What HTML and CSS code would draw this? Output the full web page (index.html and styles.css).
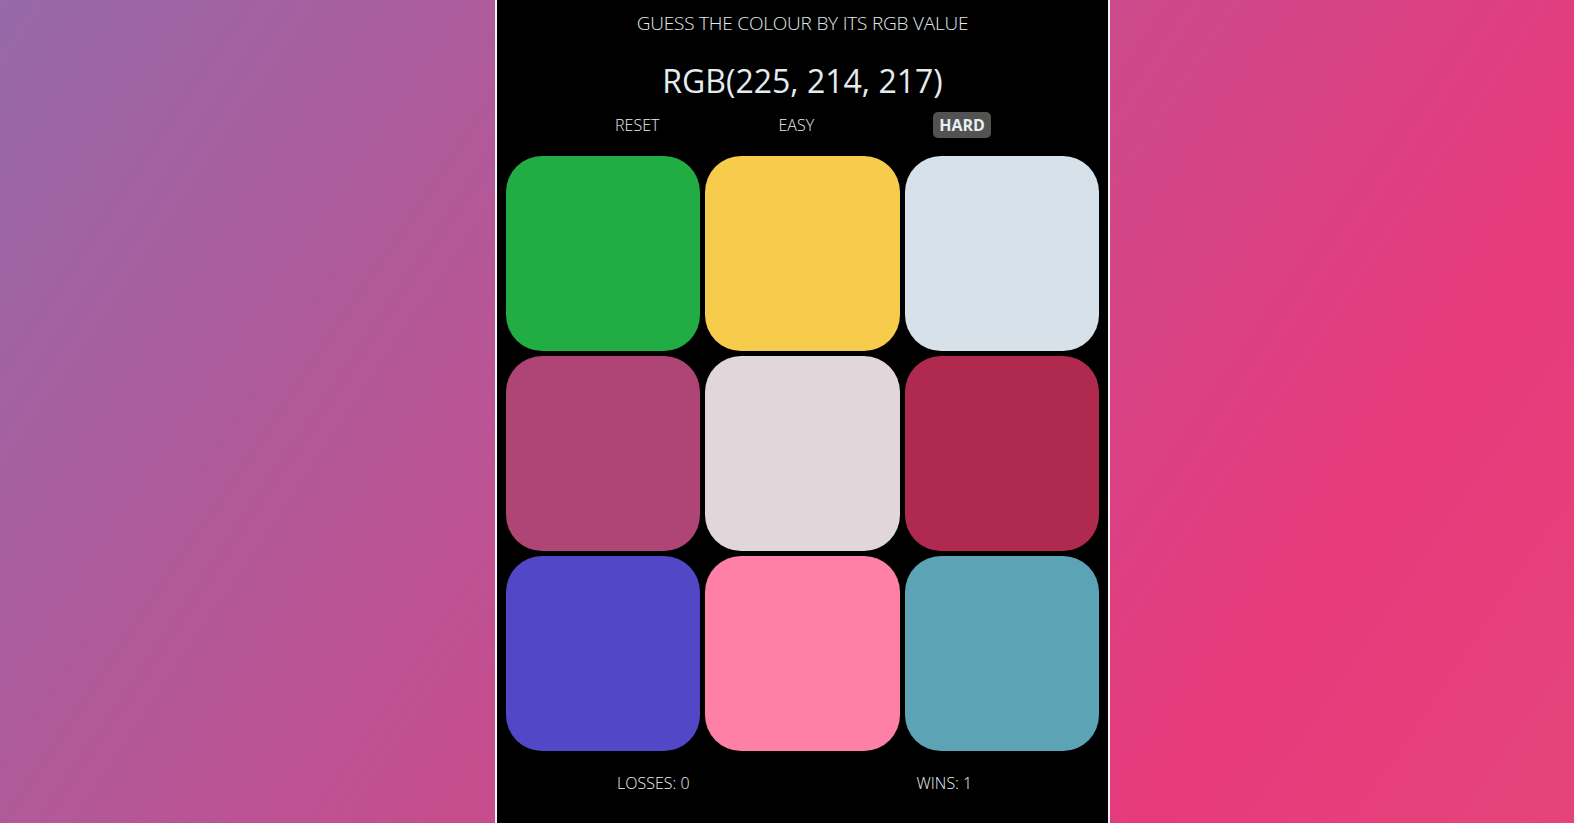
FILE: index.html
```html
<!DOCTYPE html>
<html lang="en">
<head>
<meta charset="utf-8">
<title>Colour Guessing Game</title>
<link rel="stylesheet" href="styles.css">
</head>
<body>
  <main class="game">
    <h1 class="title">GUESS THE COLOUR BY ITS RGB VALUE</h1>
    <h2 class="target">RGB(225, 214, 217)</h2>
    <nav class="controls">
      <button class="control">RESET</button>
      <button class="control">EASY</button>
      <button class="control control--active">HARD</button>
    </nav>
    <div class="board">
      <div class="tile tile--green"></div>
      <div class="tile tile--yellow"></div>
      <div class="tile tile--ice"></div>
      <div class="tile tile--mauve"></div>
      <div class="tile tile--target"></div>
      <div class="tile tile--crimson"></div>
      <div class="tile tile--violet"></div>
      <div class="tile tile--pink"></div>
      <div class="tile tile--teal"></div>
    </div>
    <footer class="score">
      <span class="score__item">LOSSES: 0</span>
      <span class="score__item">WINS: 1</span>
    </footer>
  </main>
</body>
</html>
```

FILE: styles.css
```css
html, body {
  margin: 0;
  padding: 0;
  height: 100%;
}

body {
  font-family: "Open Sans", "Noto Sans", sans-serif;
  background: linear-gradient(124deg, #9669a8 0%, #e73a7c 80%, #e5447a 100%);
  padding-left: 31px;
  box-sizing: border-box;
  overflow: hidden;
}

.game {
  width: 615px;
  min-height: 100vh;
  margin: 0 auto;
  box-sizing: border-box;
  background: #000;
  border-left: 2px solid #f2f2f2;
  border-right: 2px solid #f2f2f2;
  padding: 9px 9px 0;
  display: flex;
  flex-direction: column;
}

.title {
  margin: 0;
  font-size: 19px;
  line-height: 28px;
  font-weight: 300;
  letter-spacing: -0.2px;
  color: #e2e9ec;
  text-align: center;
}

.target {
  margin: 22px 0 0;
  font-size: 32px;
  line-height: 44px;
  font-weight: 400;
  color: #e4ecf0;
  text-align: center;
}

.controls {
  margin: 9px -11px 0 -10px;
  display: flex;
  justify-content: space-evenly;
  align-items: center;
}

.control {
  font-family: inherit;
  font-size: 16px;
  line-height: 22px;
  font-weight: 300;
  color: #e8eef1;
  background: none;
  border: 0;
  padding: 2px 0;
  border-radius: 5px;
  cursor: pointer;
}

.control--active {
  font-weight: 700;
  background: #525252;
  color: #e8eef1;
  padding: 2px 6px;
}

.board {
  margin-top: 18px;
  display: grid;
  grid-template-columns: repeat(3, 1fr);
  grid-auto-rows: 195px;
  column-gap: 5px;
  row-gap: 5px;
}

.tile {
  border-radius: 36px;
}

.tile--green { background: #21ac44; }
.tile--yellow { background: #f7cb4c; }
.tile--ice { background: #d6e1ea; }
.tile--mauve { background: #ae4574; }
.tile--target { background: #e1d6d9; }
.tile--crimson { background: #b02a50; }
.tile--violet { background: #5247c6; }
.tile--pink { background: #fe80a7; }
.tile--teal { background: #5ca3b5; }

.score {
  margin: 20px -9px 0;
  padding-left: 120px;
  display: flex;
  gap: 227px;
}

.score__item {
  font-size: 16px;
  line-height: 24px;
  font-weight: 300;
  color: #eef2f5;
}
```
